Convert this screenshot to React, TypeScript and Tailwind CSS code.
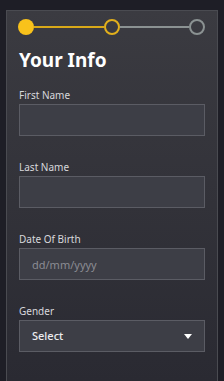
import React from "react";

const Field = ({ label, placeholder }: { label: string; placeholder?: string }) => (
  <div className="flex flex-col">
    <label className="text-[10px] leading-[14px] text-[#d8d8dc]">{label}</label>
    <input
      className="mt-[2px] h-[32px] w-full border border-[#5b5c64] bg-[#3d3e46] px-[12px] text-[11px] text-[#e0e0e4] outline-none placeholder:text-[#8b8c93]"
      placeholder={placeholder}
    />
  </div>
);

export default function App() {
  return (
    <div
      className="flex h-[381px] w-[224px] flex-col overflow-hidden bg-[#1e1e26] pl-[6px] pr-[6px] pt-[10px]"
      style={{ fontFamily: '"Noto Sans", "Open Sans", sans-serif' }}
    >
      <div className="flex flex-1 flex-col border border-b-0 border-[#4a4b51] bg-gradient-to-b from-[#3b3b41] to-[#2a2a32] pl-[11px] pr-[12px] pt-[8px]">
        {/* stepper */}
        <div className="flex items-center">
          <span className="h-[16px] w-[16px] rounded-full bg-[#f9c21b]" />
          <span className="h-[2px] flex-1 bg-[#d9a919]" />
          <span className="h-[16px] w-[16px] rounded-full border-2 border-[#e2b01c]" />
          <span className="h-[2px] flex-1 bg-[#8b9292]" />
          <span className="h-[16px] w-[16px] rounded-full border-2 border-[#8b9292]" />
        </div>

        <h1 className="mt-[13px] pl-[1px] text-[19px] font-bold leading-[24px] text-white">Your Info</h1>

        <div className="mt-[16px] flex flex-col gap-[24px] pl-[1px]">
          <Field label="First Name" />
          <Field label="Last Name" />
          <Field label="Date Of Birth" placeholder="dd/mm/yyyy" />
          <div className="flex flex-col">
            <label className="text-[10px] leading-[14px] text-[#d8d8dc]">Gender</label>
            <div className="mt-[2px] flex h-[32px] items-center justify-between border border-[#5b5c64] bg-[#3d3e46] pl-[12px] pr-[12px]">
              <span className="text-[11px] font-medium text-[#ececf0]">Select</span>
              <svg width="8" height="5" viewBox="0 0 8 5">
                <path d="M0 0h8L4 5z" fill="#ffffff" />
              </svg>
            </div>
          </div>
        </div>
      </div>
    </div>
  );
}
